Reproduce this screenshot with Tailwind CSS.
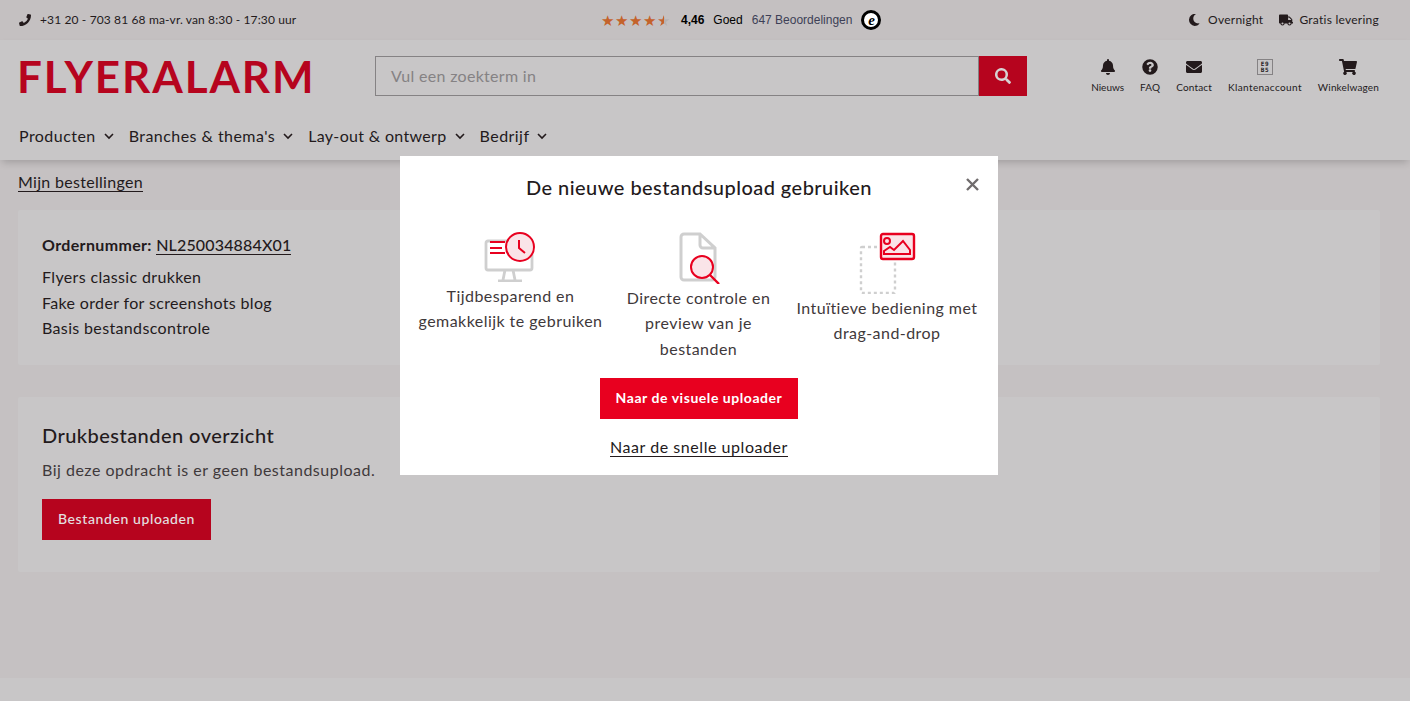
<!DOCTYPE html>
<html lang="nl">
<head>
    <meta charset="UTF-8">
    <meta name="viewport" content="width=device-width, initial-scale=1.0">
    <title>Drukbestanden overzicht</title>
    <script src="https://cdn.jsdelivr.net/npm/@tailwindcss/browser@4"></script>
</head>
<body class="relative h-[701px] overflow-hidden bg-[#c8c6c7] font-['Lato',sans-serif] tracking-[0.45px] text-[#231a1c]">
    <!-- top bar -->
    <div class="flex h-10 items-center bg-[#c4c0c1] pl-[19px] pr-[31px] text-xs tracking-[0.13px]">
        <div class="flex w-[582px] items-center gap-[9px]">
            <svg class="h-3 w-3" viewBox="0 0 512 512" fill="currentColor"><path d="M493 24 389 0c-11-3-23 3-28 14l-48 112c-4 10-1 21 7 28l61 50c-36 76-98 139-176 176l-50-61c-7-8-18-11-28-7L15 360c-11 5-17 17-14 28l24 104c3 11 12 20 24 20 256 0 463-207 463-464 0-12-8-21-19-24z"/></svg>
            <span>+31 20 - 703 81 68 ma-vr. van 8:30 - 17:30 uur</span>
        </div>
        <div class="flex items-center font-['Liberation_Sans',sans-serif] text-xs tracking-normal">
            <span class="text-[15px] leading-none tracking-[1px] text-[#c4622b]">★★★★<span class="bg-linear-to-r from-[#c4622b] from-50% to-[#b5b1b2] to-50% bg-clip-text text-transparent">★</span></span>
            <b class="ml-[10px] text-black">4,46</b>
            <span class="ml-[9px] text-black">Goed</span>
            <span class="ml-[9px] text-[#3d3f56]">647 Beoordelingen</span>
            <span class="ml-[9px] flex h-5 w-5 items-center justify-center rounded-full border-[3px] border-black bg-white font-['Liberation_Serif',serif] text-[15px] font-bold italic leading-none text-black">e</span>
        </div>
        <div class="ml-auto flex items-center gap-4 tracking-[0.25px]">
            <span class="flex items-center gap-2">
                <svg class="h-3 w-3" viewBox="0 0 512 512" fill="currentColor"><path d="M283 512c79 0 151-36 199-95 7-9-1-22-12-20-128 24-245-74-245-203 0-74 40-142 104-179 10-6 8-21-4-23A256 256 0 1 0 283 512z"/></svg>
                Overnight
            </span>
            <span class="flex items-center gap-[6px]">
                <svg class="h-3 w-3.5" viewBox="0 0 640 512" fill="currentColor"><path d="M624 352h-16V244c0-13-5-25-14-34L494 110c-9-9-21-14-34-14h-44V48c0-26-22-48-48-48H48C22 0 0 22 0 48v320c0 26 22 48 48 48h16a96 96 0 0 0 192 0h128a96 96 0 0 0 192 0h48c9 0 16-7 16-16v-32c0-9-7-16-16-16zM160 464a48 48 0 1 1 0-96 48 48 0 0 1 0 96zm320 0a48 48 0 1 1 0-96 48 48 0 0 1 0 96zm80-208H416V144h44l100 100z"/></svg>
                Gratis levering
            </span>
        </div>
    </div>

    <!-- header -->
    <header class="relative h-[120px] bg-[#c8c6c7] pl-[18px] pr-[31px] shadow-[0_4px_8px_-2px_rgba(0,0,0,0.2)]">
        <div class="flex h-[72px] items-start pt-4">
            <div class="-ml-px w-[358px] font-['Lato',sans-serif] text-[44px] font-bold leading-[40px] tracking-[1.9px] text-[#b6041e]">FLYERALARM</div>
            <div class="flex h-10 w-[652px]">
                <div class="flex flex-1 items-center border border-[#858284] bg-[#c8c6c7] pl-[15px] text-base tracking-[0.3px] text-[#858284]">Vul een zoekterm in</div>
                <div class="flex w-12 items-center justify-center bg-[#b6041e]">
                    <svg class="h-4 w-4" viewBox="0 0 512 512" fill="#d6d2d3"><path d="M505 442 405 343c-4-5-10-7-17-7h-16a208 208 0 1 0-36 36v16c0 7 2 13 7 17l99 100c9 9 24 9 34 0l28-28c9-10 9-25 1-35zM208 336a128 128 0 1 1 0-256 128 128 0 0 1 0 256z"/></svg>
                </div>
            </div>
            <div class="ml-auto mt-[3px] flex gap-4 text-[10px] leading-none tracking-[0.15px]">
                <div class="flex flex-col items-center gap-[7px] tracking-normal">
                    <svg class="h-4 w-4" viewBox="0 0 448 512" fill="currentColor"><path d="M224 512c35 0 64-29 64-64H160c0 35 29 64 64 64zm215-150c-19-21-55-52-55-154 0-78-54-140-128-155V32a32 32 0 1 0-64 0v21C118 68 64 130 64 208c0 102-36 133-55 154-6 6-9 14-9 22 0 16 13 32 32 32h384c19 0 32-16 32-32 0-8-3-16-9-22z"/></svg>
                    <span>Nieuws</span>
                </div>
                <div class="flex flex-col items-center gap-[7px]">
                    <svg class="h-4 w-4" viewBox="0 0 512 512" fill="currentColor"><path d="M504 256a248 248 0 1 1-496 0 248 248 0 0 1 496 0zM263 90c-54 0-89 23-116 64-4 5-3 12 3 16l35 26c5 4 13 3 17-2 18-23 30-36 57-36 20 0 45 13 45 32 0 15-12 22-31 33-23 13-53 29-53 68v5c0 7 5 12 12 12h56c7 0 12-5 12-12v-3c0-27 79-28 79-101 0-55-57-102-116-102zm-7 234a44 44 0 1 0 0 88 44 44 0 0 0 0-88z"/></svg>
                    <span>FAQ</span>
                </div>
                <div class="flex flex-col items-center gap-[7px]">
                    <svg class="h-4 w-4" viewBox="0 0 512 512" fill="currentColor"><path d="M502 191c4-3 10 0 10 5v204c0 27-21 48-48 48H48c-27 0-48-21-48-48V196c0-5 6-8 10-5 22 17 52 39 154 113 21 15 57 48 92 48s72-33 92-48c102-74 132-96 154-113zM256 320c23 0 56-29 73-41 133-97 143-105 174-129 6-5 9-12 9-19v-19c0-27-21-48-48-48H48C21 64 0 85 0 112v19c0 7 3 14 9 19 31 24 41 32 174 129 17 12 50 41 73 41z"/></svg>
                    <span>Contact</span>
                </div>
                <div class="flex flex-col items-center gap-[7px] tracking-[0.38px]">
                    <div class="flex h-4 w-4 items-center justify-center border border-[#858284] font-['DejaVu_Sans_Mono',monospace] text-[6px] font-bold leading-[6px] tracking-[0.5px]"><span class="text-center">E9<br>B5</span></div>
                    <span>Klantenaccount</span>
                </div>
                <div class="flex flex-col items-center gap-[7px]">
                    <svg class="h-4 w-[18px]" viewBox="0 0 576 512" fill="currentColor"><path d="M528 301 575 93c4-15-8-29-23-29H159l-9-45C147 8 137 0 126 0H24C11 0 0 11 0 24v16c0 13 11 24 24 24h70l70 343a56 56 0 1 0 67 9h210a56 56 0 1 0 64-10l6-25c3-15-8-29-24-29H218l-6-32h293c11 0 21-8 23-19z"/></svg>
                    <span>Winkelwagen</span>
                </div>
            </div>
        </div>
        <nav class="flex h-12 items-center gap-[14px] pl-px text-base">
            <span class="flex items-center gap-[7px]">Producten <svg class="h-3 w-3" viewBox="0 0 12 12" fill="none" stroke="currentColor" stroke-width="1.6"><path d="M2 4l4 4 4-4"/></svg></span>
            <span class="flex items-center gap-[7px]">Branches &amp; thema's <svg class="h-3 w-3" viewBox="0 0 12 12" fill="none" stroke="currentColor" stroke-width="1.6"><path d="M2 4l4 4 4-4"/></svg></span>
            <span class="flex items-center gap-[7px] tracking-[0.33px]">Lay-out &amp; ontwerp <svg class="h-3 w-3" viewBox="0 0 12 12" fill="none" stroke="currentColor" stroke-width="1.6"><path d="M2 4l4 4 4-4"/></svg></span>
            <span class="flex items-center gap-[7px]">Bedrijf <svg class="h-3 w-3" viewBox="0 0 12 12" fill="none" stroke="currentColor" stroke-width="1.6"><path d="M2 4l4 4 4-4"/></svg></span>
        </nav>
    </header>

    <!-- main -->
    <main class="h-[518px] bg-[#c5c1c2] pl-[18px] pr-[30px] pt-[10px]">
        <a class="inline-block border-b border-[#231a1c] text-base leading-[19px] tracking-[0.3px]">Mijn bestellingen</a>
        <section class="mt-[16px] h-[155px] rounded-[2px] bg-[#c8c6c7] px-6 pt-6">
            <p class="text-base font-medium leading-[22px] tracking-[0.35px]"><b>Ordernummer:</b> <span class="border-b border-[#231a1c] tracking-[0.15px]">NL250034884X01</span></p>
            <p class="mt-[8px] text-base leading-[25.5px] tracking-[0.35px]">Flyers classic drukken<br>Fake order for screenshots blog<br>Basis bestandscontrole</p>
        </section>
        <section class="mt-8 h-[175px] rounded-[2px] bg-[#c8c6c7] px-6 pt-[26px]">
            <h2 class="text-xl font-medium leading-6">Drukbestanden overzicht</h2>
            <p class="mt-[11px] text-base leading-6 tracking-[0.5px] text-[#3f393b]">Bij deze opdracht is er geen bestandsupload.</p>
            <button class="mt-[17px] h-[41px] w-[169px] bg-[#b6041e] pb-0.5 text-sm font-medium tracking-[0.6px] text-[#e4e0e1]">Bestanden uploaden</button>
        </section>
    </main>

    <!-- modal -->
    <div class="absolute left-[400px] top-[156px] h-[319px] w-[598px] bg-white text-center">
        <h3 class="mt-[19px] text-xl font-medium leading-6">De nieuwe bestandsupload gebruiken</h3>
        <svg class="absolute right-[19px] top-[22px] h-[13px] w-[13px]" viewBox="0 0 13 13" stroke="#706c6d" stroke-width="2.4"><path d="M1 1l11 11M12 1 1 12"/></svg>

        <div class="mt-[33px] flex h-[150px] items-start px-[10px] text-base leading-[25.4px] text-[#3f393b]">
            <div class="w-[201px]">
                <svg class="ml-[74px] h-[50px] w-[52px]" viewBox="0 0 52 50" fill="none">
                    <path d="M4 9h42a2 2 0 0 1 2 2v25a2 2 0 0 1-2 2H4a2 2 0 0 1-2-2V11a2 2 0 0 1 2-2zM21 38l-2 10M29 38l2 10M14 49h24" stroke="#cfcfcf" stroke-width="2.8"/>
                    <circle cx="36" cy="15" r="14" fill="#fae4e8" stroke="#e8001f" stroke-width="2"/>
                    <path d="M35 8v8l6 5M6 10h15M6 16h12M6 21h15" stroke="#e8001f" stroke-width="2"/>
                </svg>
                <p class="mt-[1px]">Tijdbesparend en<br>gemakkelijk te gebruiken</p>
            </div>
            <div class="w-[175px]">
                <svg class="ml-[68px] h-[52px] w-[42px]" viewBox="0 0 42 52" fill="none">
                    <path d="M5 2h16l15 14v29a3 3 0 0 1-3 3H5a3 3 0 0 1-3-3V5a3 3 0 0 1 3-3zM21 2v11a3 3 0 0 0 3 3h12" stroke="#cfcfcf" stroke-width="3"/>
                    <circle cx="23" cy="35" r="11" fill="#fae4e8" stroke="#e8001f" stroke-width="2"/>
                    <path d="M31 43l9 9" stroke="#e8001f" stroke-width="2.4"/>
                </svg>
                <p class="mt-[1px]">Directe controle en<br>preview van je<br>bestanden</p>
            </div>
            <div class="w-[202px]">
                <svg class="ml-[73px] h-[62px] w-[58px]" viewBox="0 0 58 62" fill="none">
                    <rect x="2" y="15" width="34" height="46" rx="1" stroke="#cfcfcf" stroke-width="2.4" stroke-dasharray="3 3"/>
                    <rect x="22" y="2" width="33" height="25" rx="2" fill="#fae4e8" stroke="#e8001f" stroke-width="2.4"/>
                    <circle cx="28" cy="9" r="3" stroke="#e8001f" stroke-width="2"/>
                    <path d="M25 19l6-4 4 3 9-9 7 9v4H25z" stroke="#e8001f" stroke-width="2"/>
                </svg>
                <p class="mt-[1px]">Intuïtieve bediening met<br>drag-and-drop</p>
            </div>
        </div>

        <button class="absolute left-[200px] top-[222px] h-[41px] w-[198px] bg-[#e8001f] pb-0.5 text-sm font-bold tracking-[0.55px] text-white">Naar de visuele uploader</button>
        <a class="absolute left-[210px] top-[281px] border-b border-[#231a1c] text-base leading-[19px] tracking-[0.55px]">Naar de snelle uploader</a>
    </div>
</body>
</html>
